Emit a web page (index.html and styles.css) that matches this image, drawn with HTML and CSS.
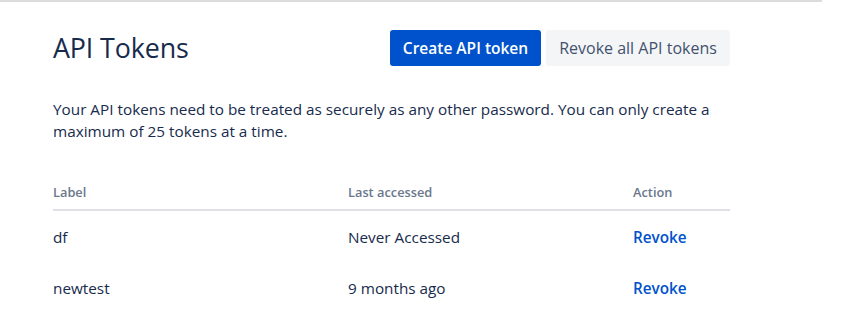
FILE: index.html
```html
<!DOCTYPE html>
<html lang="en">
<head>
<meta charset="utf-8">
<title>API Tokens</title>
<link rel="stylesheet" href="styles.css">
</head>
<body>
<div class="topbar"></div>
<main class="page">
  <header class="page-header">
    <h1 class="title">API Tokens</h1>
    <div class="actions">
      <button class="btn btn-primary" type="button">Create API token</button>
      <button class="btn btn-default" type="button">Revoke all API tokens</button>
    </div>
  </header>
  <p class="intro">Your API tokens need to be treated as securely as any other password. You can only create a maximum of 25 tokens at a time.</p>
  <table class="tokens">
    <thead>
      <tr>
        <th class="col-label">Label</th>
        <th class="col-accessed">Last accessed</th>
        <th class="col-action">Action</th>
      </tr>
    </thead>
    <tbody>
      <tr>
        <td>df</td>
        <td>Never Accessed</td>
        <td><a class="revoke" href="#">Revoke</a></td>
      </tr>
      <tr>
        <td>newtest</td>
        <td>9 months ago</td>
        <td><a class="revoke" href="#">Revoke</a></td>
      </tr>
    </tbody>
  </table>
</main>
</body>
</html>
```
FILE: styles.css
```css
html, body {
  margin: 0;
  padding: 0;
  background: #ffffff;
}
body {
  font-family: "Open Sans", "Noto Sans", "Liberation Sans", sans-serif;
  color: #172b4d;
  width: 851px;
  height: 320px;
  overflow: hidden;
}
.topbar {
  width: 822px;
  height: 2px;
  background: #dcdcdc;
}
.page {
  width: 677px;
  padding-left: 53px;
}
.page-header {
  display: flex;
  align-items: center;
  justify-content: space-between;
  margin-top: 28px;
  height: 36px;
}
.title {
  margin: 0;
  font-size: 26.8px;
  font-weight: 500;
  color: #172b4d;
  letter-spacing: -0.1px;
  position: relative;
  top: -1px;
}
.actions {
  display: flex;
  gap: 5px;
}
.btn {
  font-family: inherit;
  height: 36px;
  border: none;
  border-radius: 3px;
  padding: 0;
  cursor: pointer;
}
.btn-primary {
  background: #0052cc;
  color: #ffffff;
  font-size: 15.5px;
  font-weight: 600;
  width: 151px;
}
.btn-default {
  background: #f4f5f7;
  color: #42526e;
  font-size: 16px;
  font-weight: 500;
  width: 184px;
}
.intro {
  margin: 32px 0 0 0;
  font-size: 15.3px;
  line-height: 22px;
  color: #172b4d;
}
.tokens {
  margin-top: 41px;
  width: 677px;
  border-collapse: collapse;
}
.tokens th {
  text-align: left;
  font-size: 12.8px;
  font-weight: 600;
  color: #6b778c;
  padding: 0 0 8px 0;
  border-bottom: 2px solid #dfe1e6;
}
.col-label { width: 295px; }
.col-accessed { width: 285px; }
.tokens td {
  font-size: 15.3px;
  color: #172b4d;
  height: 51px;
  padding: 0;
  vertical-align: middle;
}
.revoke {
  color: #0052cc;
  font-weight: 600;
  text-decoration: none;
}
```
